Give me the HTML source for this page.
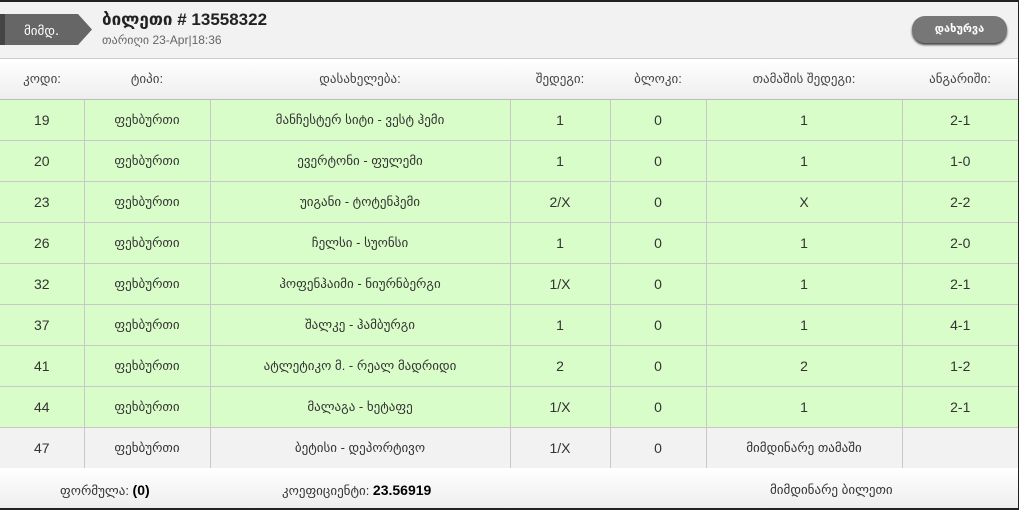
<!DOCTYPE html>
<html><head><meta charset="utf-8"><style>
*{margin:0;padding:0;box-sizing:border-box}
body{width:1019px;height:510px;overflow:hidden;background:#222;font-family:"Liberation Sans","DejaVu Sans",sans-serif;color:#333}
#w{position:absolute;left:0;top:2px;width:1018px;height:506px;background:#f2f2f2}
#hd{position:absolute;left:0;top:0;width:1018px;height:57px;background:#f2f2f2;border-bottom:1px solid #ccc}
#tag{position:absolute;left:0;top:12px;width:92px;height:31px}
#ttl{position:absolute;left:102px;top:8px;font-size:17px;font-weight:bold;color:#222}
#dt{position:absolute;left:102px;top:31px;font-size:12px;color:#666}
#btn{position:absolute;left:912px;top:14px;width:95px;height:27px;border-radius:13px;background:#777;color:#fff;font-size:11px;font-weight:bold;text-align:center;line-height:27px;box-shadow:0 2px 2px #444}
table{position:absolute;left:0;top:57px;border-collapse:collapse;width:1018px}
th{height:40px;font-weight:normal;font-size:13px;color:#444;background:linear-gradient(#fff,#eee);border-bottom:1px solid #bbb}
td{height:41px;text-align:center;font-size:13px;border:1px solid #c8c8c8;border-top:none;background:#d9fdc9}
td:first-child{border-left:none}td:last-child{border-right:none}
td.n{font-size:14px}
tr.g td{background:#f2f2f2}
#ft{position:absolute;left:0;top:466px;width:1018px;height:40px;background:linear-gradient(#fff,#eee);font-size:13px}
#ft span{position:absolute;top:14px}
</style></head><body><div id="w">
<div id="hd">
<svg id="tag" viewBox="0 0 92 31"><polygon points="4,0 78,0 92,15.5 78,31 4,31" fill="#666"/><rect x="0" y="0" width="5" height="31" fill="#444"/><text x="24" y="21" fill="#fff" font-size="13" font-family="DejaVu Sans,sans-serif">მიმდ.</text></svg>
<div id="ttl">ბილეთი # 13558322</div>
<div id="dt">თარიღი 23-Apr|18:36</div>
<div id="btn">დახურვა</div>
</div>
<table>
<tr><th style="width:84px">კოდი:</th><th style="width:126px">ტიპი:</th><th style="width:300px">დასახელება:</th><th style="width:100px">შედეგი:</th><th style="width:96px">ბლოკი:</th><th style="width:196px">თამაშის შედეგი:</th><th>ანგარიში:</th></tr>
<tr><td class="n">19</td><td>ფეხბურთი</td><td>მანჩესტერ სიტი - ვესტ ჰემი</td><td class="n">1</td><td class="n">0</td><td class="n">1</td><td class="n">2-1</td></tr>
<tr><td class="n">20</td><td>ფეხბურთი</td><td>ევერტონი - ფულემი</td><td class="n">1</td><td class="n">0</td><td class="n">1</td><td class="n">1-0</td></tr>
<tr><td class="n">23</td><td>ფეხბურთი</td><td>უიგანი - ტოტენჰემი</td><td class="n">2/X</td><td class="n">0</td><td class="n">X</td><td class="n">2-2</td></tr>
<tr><td class="n">26</td><td>ფეხბურთი</td><td>ჩელსი - სუონსი</td><td class="n">1</td><td class="n">0</td><td class="n">1</td><td class="n">2-0</td></tr>
<tr><td class="n">32</td><td>ფეხბურთი</td><td>ჰოფენჰაიმი - ნიურნბერგი</td><td class="n">1/X</td><td class="n">0</td><td class="n">1</td><td class="n">2-1</td></tr>
<tr><td class="n">37</td><td>ფეხბურთი</td><td>შალკე - ჰამბურგი</td><td class="n">1</td><td class="n">0</td><td class="n">1</td><td class="n">4-1</td></tr>
<tr><td class="n">41</td><td>ფეხბურთი</td><td>ატლეტიკო მ. - რეალ მადრიდი</td><td class="n">2</td><td class="n">0</td><td class="n">2</td><td class="n">1-2</td></tr>
<tr><td class="n">44</td><td>ფეხბურთი</td><td>მალაგა - ხეტაფე</td><td class="n">1/X</td><td class="n">0</td><td class="n">1</td><td class="n">2-1</td></tr>
<tr class="g"><td class="n">47</td><td>ფეხბურთი</td><td>ბეტისი - დეპორტივო</td><td class="n">1/X</td><td class="n">0</td><td>მიმდინარე თამაში</td><td></td></tr>
</table>
<div id="ft"><span style="left:60px">ფორმულა: <b style="font-size:14px;color:#000">(0)</b></span><span style="left:282px">კოეფიციენტი: <b style="font-size:14px;color:#000">23.56919</b></span><span style="left:770px">მიმდინარე ბილეთი</span></div>
</div></body></html>
